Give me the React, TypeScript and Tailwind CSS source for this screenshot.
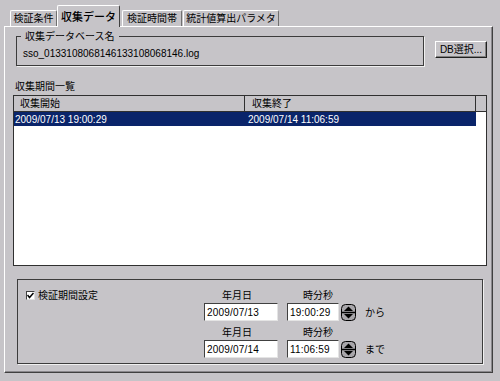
const font = "font-['Liberation_Sans','Noto_Sans_CJK_JP',sans-serif]";

type TabProps = { label: string; width: string; selected?: boolean; gap?: string };

function Tab({ label, width, selected, gap }: TabProps) {
  return (
    <div
      className={
        selected
          ? `${width} ${gap ?? ""} -mb-px flex h-[22px] items-start justify-center rounded-t-[2px] border-t border-r border-l border-t-white border-r-[#404040] border-l-white bg-[#c6c4c8] pt-[3px] text-[11px] font-medium`
          : `${width} ${gap ?? ""} flex h-[16px] items-center justify-center rounded-t-[2px] border-t border-r border-l border-t-white border-r-[#707070] border-l-white`
      }
    >
      {label}
    </div>
  );
}

function Spinner() {
  return (
    <svg width="15" height="17" viewBox="0 0 15 17" className="ml-[2px] shrink-0">
      <rect x="0.5" y="0.5" width="14" height="16" rx="4" fill="#a8a6aa" stroke="#000" />
      <line x1="1" y1="8.5" x2="14" y2="8.5" stroke="#000" strokeWidth="1.5" />
      <path d="M3 7 L7.5 2.5 L12 7 Z" fill="#000" />
      <path d="M3 10 L7.5 14.5 L12 10 Z" fill="#000" />
    </svg>
  );
}

function Field({ value, width }: { value: string; width: string }) {
  return (
    <div
      className={`${width} flex h-[18px] items-center border border-t-[#404040] border-r-[#e4e4e4] border-b-[#e4e4e4] border-l-[#404040] bg-white pl-[2px] text-[10px] tracking-[0.2px]`}
    >
      {value}
    </div>
  );
}

function PeriodRow({ date, time, suffix, top }: { date: string; time: string; suffix: string; top: string }) {
  return (
    <div className={top}>
      <div className="flex h-[12px] items-center text-[10px]">
        <span className="w-[83px] pl-[18px]">年月日</span>
        <span className="pl-[16px]">時分秒</span>
      </div>
      <div className="mt-[2px] flex items-center">
        <Field value={date} width="w-[74px]" />
        <div className="ml-[9px]">
          <Field value={time} width="w-[52px]" />
        </div>
        <Spinner />
        <span className="ml-[9px]">{suffix}</span>
      </div>
    </div>
  );
}

export default function App() {
  return (
    <div className={`${font} h-[381px] w-[500px] overflow-hidden bg-[#c6c4c8] pt-[5px] pl-[4px] text-[10px] text-black`}>
      <div className="relative z-10 flex h-[21px] items-end pl-[6px]">
        <Tab label="検証条件" width="w-[47px]" />
        <Tab label="収集データ" width="w-[63px]" selected />
        <Tab label="検証時間帯" width="w-[60px]" gap="ml-[2px]" />
        <Tab label="統計値算出パラメタ" width="w-[96px]" gap="ml-px" />
      </div>

      <div className="h-[347px] w-[489px] border border-t-white border-r-[#404040] border-b-[#404040] border-l-white pl-[8px] shadow-[inset_-1px_-1px_0_#8a888c]">
        {/* database name */}
        <div className="flex items-start pt-[9px] pl-[3px]">
          <div className="relative h-[30px] w-[408px] border border-[#3c3c3c] pt-[9px] pl-[6px] shadow-[1px_1px_0_#f0f0f0]">
            <span className="absolute -top-[8px] left-[4px] bg-[#c6c4c8] px-[4px] text-[10px]">収集データベース名</span>
            <span className="leading-[12px]">sso_0133108068146133108068146.log</span>
          </div>
          <button className="mt-[5px] ml-[11px] flex h-[17px] w-[52px] items-center justify-center border border-t-white border-r-[#202020] border-b-[#202020] border-l-white text-[10px] shadow-[inset_-1px_-1px_0_#808080]">
            DB選択...
          </button>
        </div>

        {/* period list */}
        <div className="mt-[15px] ml-[2px] h-[12px] leading-[12px]">収集期間一覧</div>
        <div className="mt-[2px] h-[171px] w-[474px] border border-[#303030] bg-white">
          <div className="flex h-[16px] border-b border-[#303030] bg-[#c6c4c8]">
            <div className="flex w-[231px] items-center border-r border-[#303030] pl-[6px]">収集開始</div>
            <div className="flex w-[231px] items-center border-r border-[#303030] pl-[7px]">収集終了</div>
            <div className="flex-1" />
          </div>
          <div className="flex h-[14px] w-[462px] items-center bg-[#0a246a] text-white">
            <span className="w-[234px] pl-[1px]">2009/07/13 19:00:29</span>
            <span>2009/07/14 11:06:59</span>
          </div>
        </div>

        {/* period setting */}
        <div className="mt-[13px] ml-[4px] flex h-[85px] w-[466px] border border-[#3c3c3c] pt-[9px] pl-[8px] shadow-[1px_1px_0_#f0f0f0]">
          <div className="flex h-[12px] w-[178px] items-center">
            <span className="flex h-[9px] w-[9px] items-center justify-center border border-t-[#404040] border-r-[#e0e0e0] border-b-[#e0e0e0] border-l-[#404040] bg-white">
              <svg width="7" height="7" viewBox="0 0 7 7">
                <path d="M0.5 3 L2.5 5.5 L6.5 1" fill="none" stroke="#000" strokeWidth="1.5" />
              </svg>
            </span>
            <span className="ml-[3px]">検証期間設定</span>
          </div>
          <div>
            <PeriodRow date="2009/07/13" time="19:00:29" suffix="から" top="" />
            <PeriodRow date="2009/07/14" time="11:06:59" suffix="まで" top="mt-[5px]" />
          </div>
        </div>
      </div>
    </div>
  );
}
